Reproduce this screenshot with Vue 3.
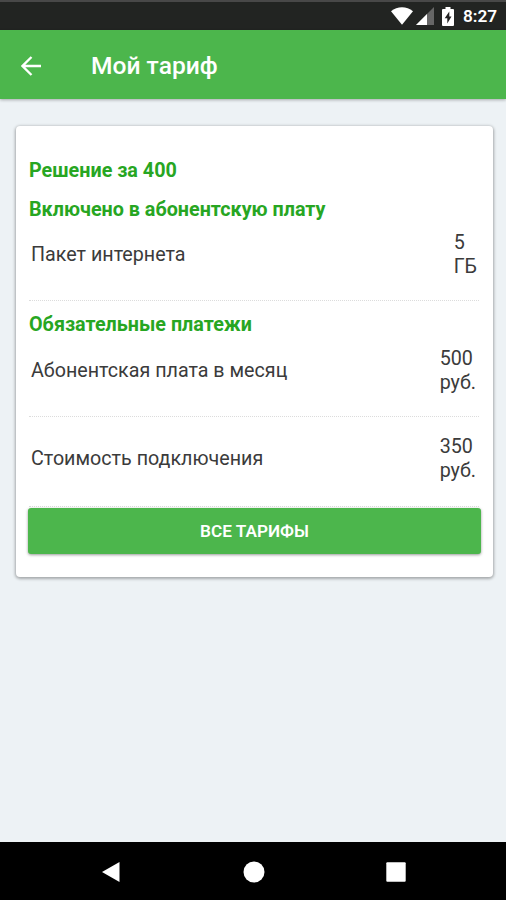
<script setup>
const included = [{ label: 'Пакет интернета', amount: '5', unit: 'ГБ' }]
const payments = [
  { label: 'Абонентская плата в месяц', amount: '500', unit: 'руб.' },
  { label: 'Стоимость подключения', amount: '350', unit: 'руб.' },
]
</script>

<template>
  <div class="screen">
    <div class="status">
      <svg class="wifi" viewBox="0 0 22 18" width="22" height="18"><path d="M0 4.2C6.3-1.2 15.7-1.2 22 4.2L11 17.8z" fill="#fff" /></svg>
      <svg class="signal" viewBox="0 0 18 18" width="18" height="18"><path d="M18 0v18H0z" fill="#666" /><path d="M11 7v11H0z" fill="#fff" /></svg>
      <svg class="battery" viewBox="0 0 12 19" width="12" height="19"><path d="M3.5 0h5v2H11q1 0 1 1v15q0 1-1 1H1q-1 0-1-1V3q0-1 1-1h2.500z" fill="#fff" /><path d="M7.300 4.500 2.700 11.300h2.600v5.200l4.200-7H7.300z" fill="#222" /></svg>
      <span class="clock">8:27</span>
    </div>
    <header class="bar">
      <svg class="back" viewBox="0 0 20 20" width="20" height="20"><path d="M10.500 1 1.500 10l9 9M1.500 10H20" fill="none" stroke="#fff" stroke-width="2.300" /></svg>
      <h1 class="title">Мой тариф</h1>
    </header>
    <main class="content">
      <section class="card">
        <h2 class="heading name">Решение за 400</h2>
        <h2 class="heading incl">Включено в абонентскую плату</h2>
        <div v-for="r in included" :key="r.label" class="row first">
          <span class="label">{{ r.label }}</span>
          <span class="value">{{ r.amount }}<br>{{ r.unit }}</span>
        </div>
        <h2 class="heading pay">Обязательные платежи</h2>
        <div v-for="r in payments" :key="r.label" class="row">
          <span class="label">{{ r.label }}</span>
          <span class="value">{{ r.amount }}<br>{{ r.unit }}</span>
        </div>
        <button class="all">ВСЕ ТАРИФЫ</button>
      </section>
    </main>
    <nav class="nav">
      <svg viewBox="0 0 20 22" width="20" height="22"><path d="M18.500 1v20L1 11z" fill="#fff" /></svg>
      <svg viewBox="0 0 22 22" width="22" height="22"><circle cx="11" cy="11" r="10.500" fill="#fff" /></svg>
      <svg viewBox="0 0 20 20" width="20" height="20"><rect x=".3" y=".3" width="19.400" height="19.400" rx="1" fill="#fff" /></svg>
    </nav>
  </div>
</template>

<style>
body { margin: 0; }
</style>

<style scoped>
.screen { width: 506px; height: 900px; display: flex; flex-direction: column; background: #edf2f5; font-family: Roboto, sans-serif; overflow: hidden; }
.status { box-sizing: border-box; height: 30px; flex: none; background: #222422; border-top: 2px solid #484848; display: flex; align-items: center; padding: 0 9px 0 391px; color: #fff; }
.wifi { flex: none; }
.signal { flex: none; margin-left: 3px; }
.battery { flex: none; margin-left: 8px; }
.clock { margin-left: 9px; font-size: 17.2px; font-weight: 600; line-height: 28px; white-space: nowrap; }
.bar { height: 69px; flex: none; background: #4cb64c; display: flex; align-items: center; padding-left: 21px; box-shadow: 0 1px 3px rgba(0, 0, 0, .3); }
.back { margin-top: 2px; }
.title { margin: 3px 0 0 50px; font-size: 24.600px; line-height: 30px; font-weight: 500; color: #fff; }
.content { flex: 1; padding: 27px 14px 0 16px; }
.card { box-sizing: border-box; width: 477px; height: 451px; background: #fff; border-radius: 4px; box-shadow: 0 1px 3px 1px rgba(0, 0, 0, .3); padding: 33px 12px 0; display: flex; flex-direction: column; }
.heading { margin: 0 1px; height: 24px; flex: none; font-size: 19.750px; line-height: 24px; font-weight: 700; color: #27a622; white-space: nowrap; }
.incl { margin-top: 15px; }
.pay { margin-top: 12px; }
.row { box-sizing: border-box; height: 90px; flex: none; margin: 0 2px 0 1px; padding: 0 3px 6px 2px; display: flex; align-items: center; justify-content: space-between; border-bottom: 1px dotted #dcdcdc; color: #3b3b3b; font-size: 19.700px; line-height: 24px; }
.row.first { height: 79px; padding: 0 2px 12px; }
.pay + .row { height: 80px; padding-bottom: 12px; }
.label { white-space: nowrap; }
.all { border: 0; padding: 0; width: 453px; height: 46px; margin: 1px 0 0; flex: none; border-radius: 3px; background: #4cb64c; box-shadow: 0 1px 3px rgba(0, 0, 0, .4); color: #fff; font: 600 17.200px/45px Roboto, sans-serif; }
.nav { height: 58px; flex: none; background: #000; display: flex; align-items: center; justify-content: space-between; padding: 2px 100px 0 101px; box-sizing: border-box; width: 506px; }
</style>
